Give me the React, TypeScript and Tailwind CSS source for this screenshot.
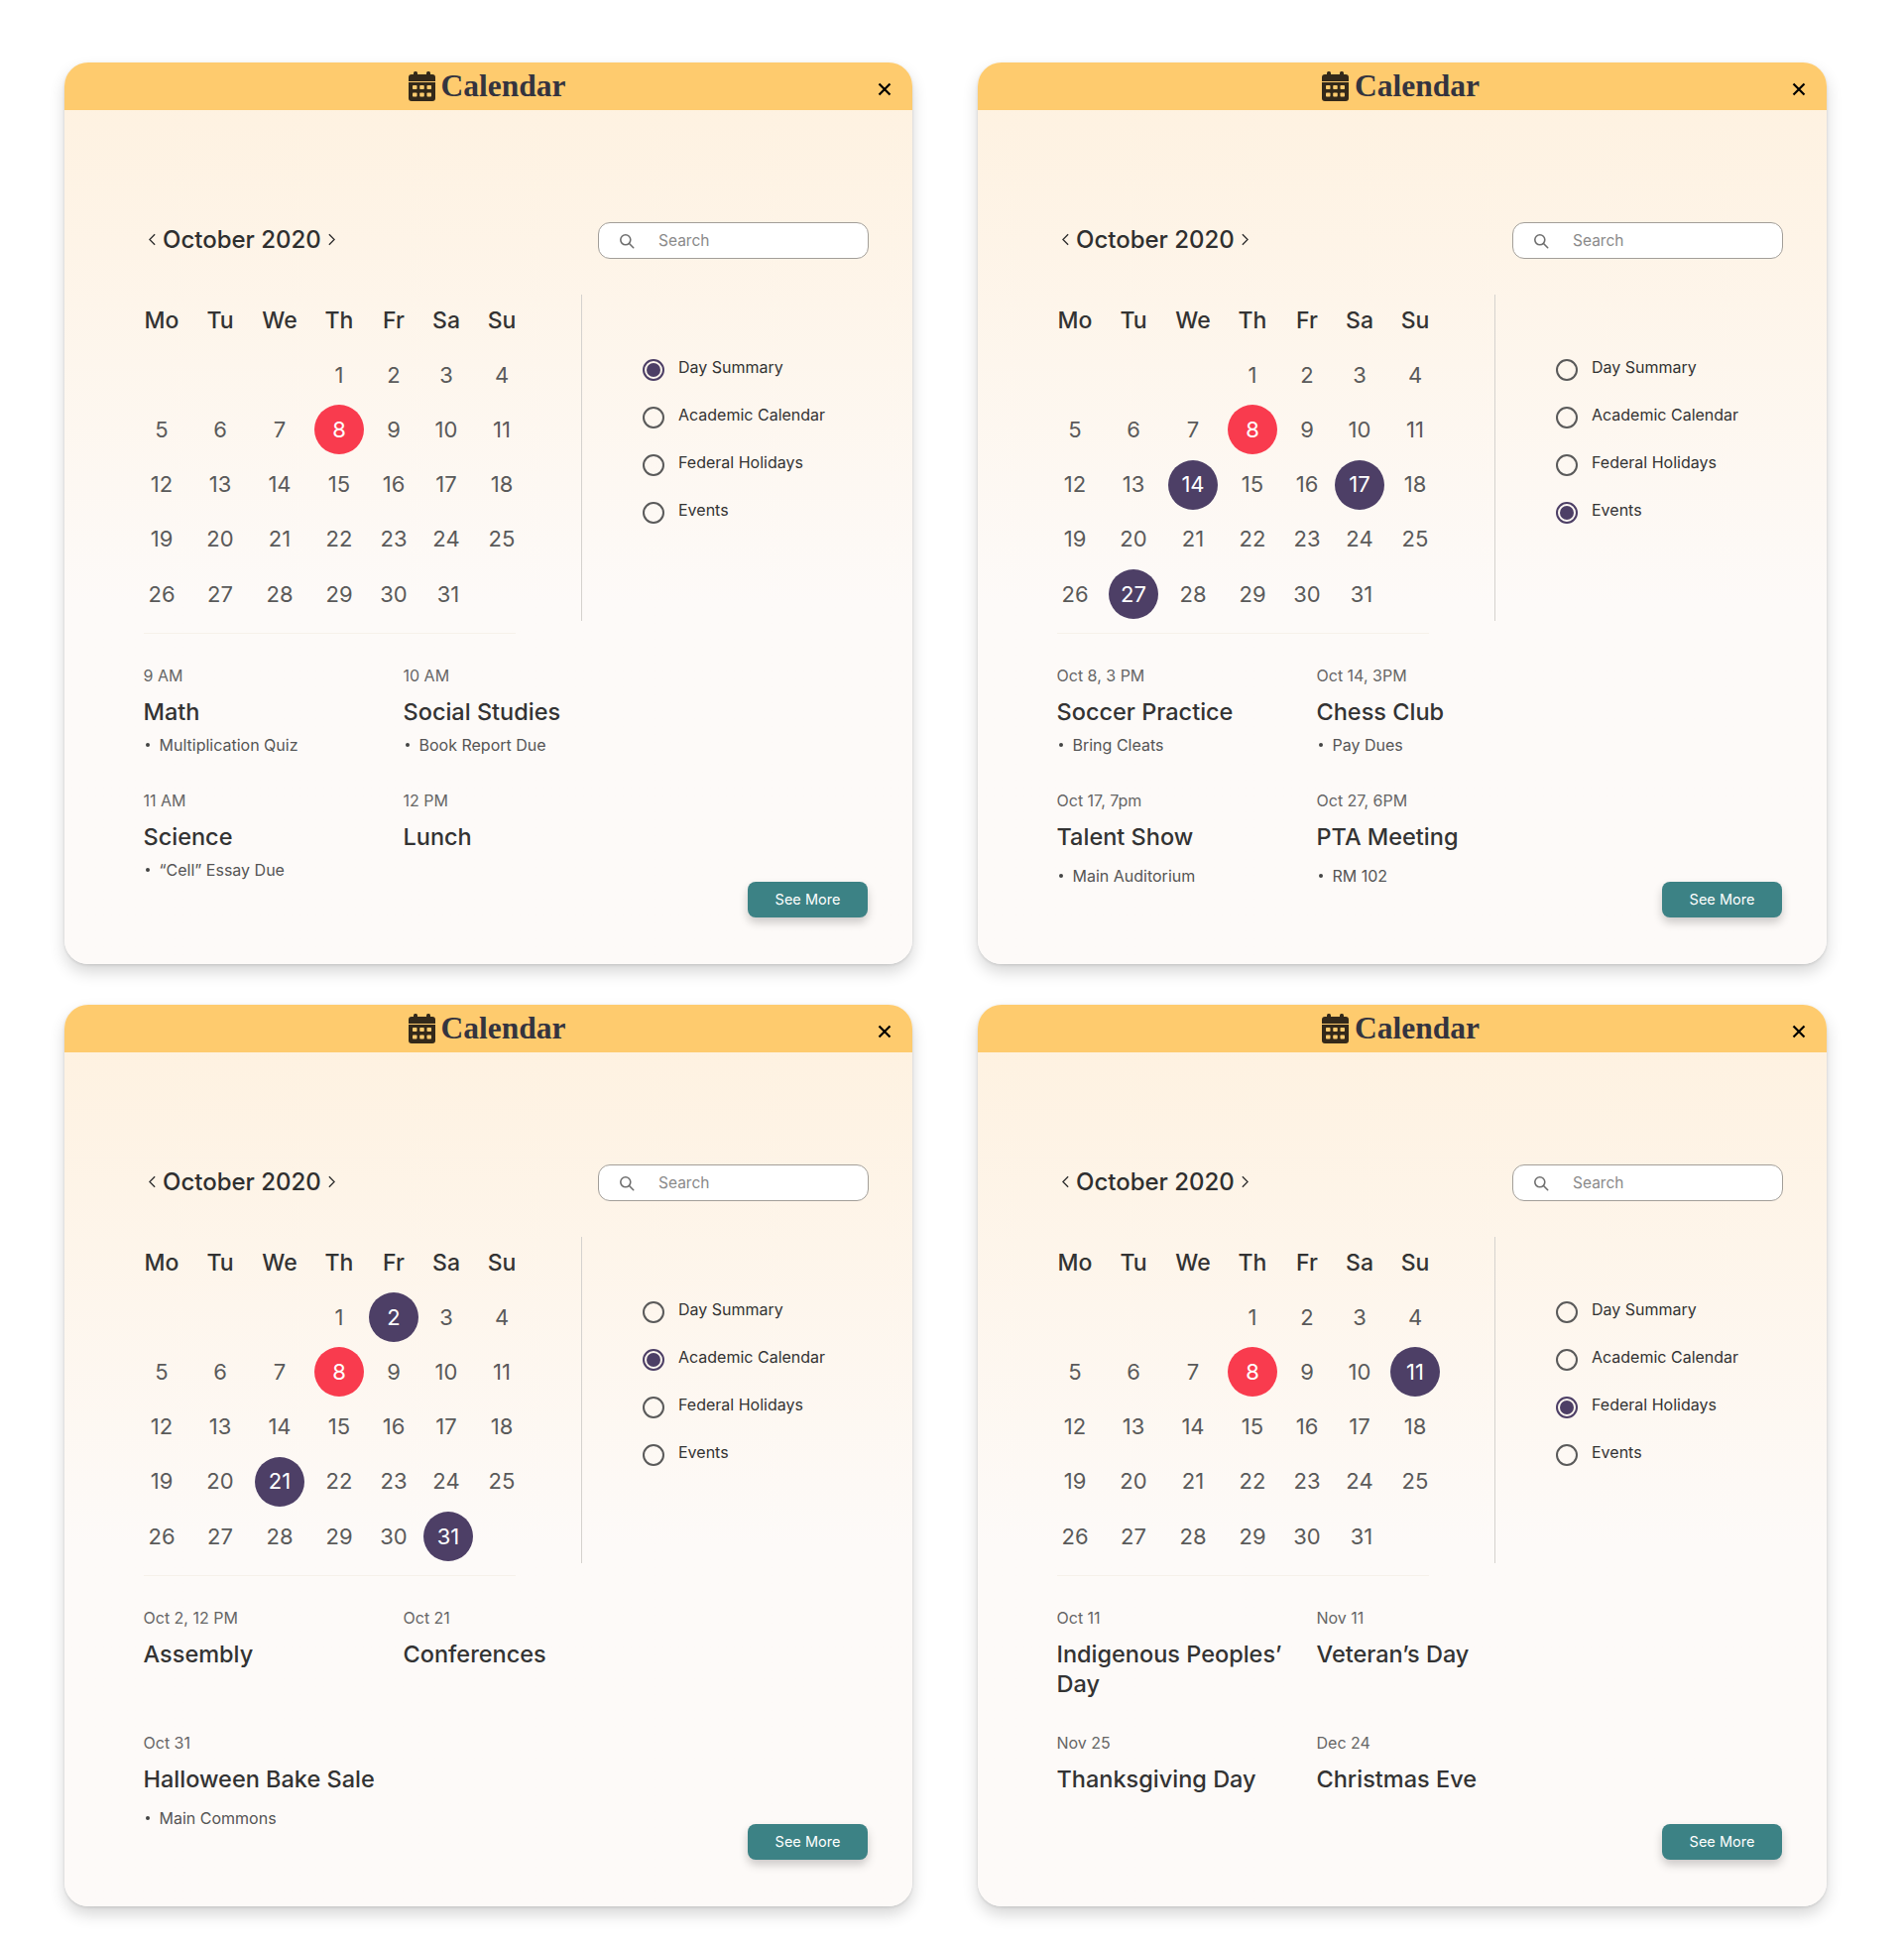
const weekdays = ['Mo', 'Tu', 'We', 'Th', 'Fr', 'Sa', 'Su'];
const options = ['Day Summary', 'Academic Calendar', 'Federal Holidays', 'Events'];

interface EventItem {
  time: string;
  title: string;
  detail?: string;
  loose?: boolean;
}

interface CalendarCardProps {
  option: number;
  picked: number[];
  events: EventItem[];
}

function CalendarIcon() {
  return (
    <svg viewBox="0 0 27 30" className="h-[30px] w-[27px]" fill="#33291a">
      <rect x="5" y="0" width="4" height="6" rx="1.5" />
      <rect x="18" y="0" width="4" height="6" rx="1.5" />
      <path d="M24 3a3 3 0 0 1 3 3v4H0V6a3 3 0 0 1 3-3z" />
      <path d="M0 11h27v16a3 3 0 0 1-3 3H3a3 3 0 0 1-3-3z" />
      <g fill="#fecb6e">
        <rect x="4" y="14" width="4.5" height="4" rx="0.8" />
        <rect x="11.25" y="14" width="4.5" height="4" rx="0.8" />
        <rect x="18.5" y="14" width="4.5" height="4" rx="0.8" />
        <rect x="4" y="21.5" width="4.5" height="4" rx="0.8" />
        <rect x="11.25" y="21.5" width="4.5" height="4" rx="0.8" />
        <rect x="18.5" y="21.5" width="4.5" height="4" rx="0.8" />
      </g>
    </svg>
  );
}

function SearchIcon() {
  return (
    <svg viewBox="0 0 16 16" className="h-[16px] w-[16px]" fill="none" stroke="#6f6f6f" strokeWidth="1.6">
      <circle cx="6.8" cy="6.8" r="5" />
      <path d="M10.5 10.5l4.2 4.2" strokeLinecap="round" />
    </svg>
  );
}

function Chevron({ right }: { right?: boolean }) {
  return (
    <svg viewBox="0 0 8 14" className="h-[13px] w-[7px]" fill="none" stroke="#2f2f2f" strokeWidth="1.6">
      <path d={right ? 'M1 1l6 6-6 6' : 'M7 1L1 7l6 6'} />
    </svg>
  );
}

function CalendarDay({ day, picked }: { day: number; picked: boolean }) {
  if (day === 8) {
    return (
      <div className="flex h-[50px] w-[50px] items-center justify-center rounded-full bg-[#f93b4e] text-white">
        {day}
      </div>
    );
  }
  if (picked) {
    return (
      <div
        className={
          day === 31
            ? 'ml-[4px] flex h-[50px] w-[50px] items-center justify-center rounded-full bg-[#4d3f66] text-white'
            : 'flex h-[50px] w-[50px] items-center justify-center rounded-full bg-[#4d3f66] text-white'
        }
      >
        {day}
      </div>
    );
  }
  return <div className={day === 31 ? 'ml-[4px]' : ''}>{day}</div>;
}

function CalendarGrid({ picked }: { picked: number[] }) {
  const days = Array.from({ length: 31 }, (_, i) => i + 1);
  return (
    <div className="-mt-[1.5px] grid w-[400px] grid-cols-[58px_60px_60px_60px_50px_56px_56px] auto-rows-[55.2px] items-center justify-items-center text-[22px] text-[#5a5a5a]">
      {weekdays.map((name) => (
        <div key={name} className="text-[23px] font-medium text-[#333333]">
          {name}
        </div>
      ))}
      <div className="col-span-3" />
      {days.map((day) => (
        <CalendarDay key={day} day={day} picked={picked.includes(day)} />
      ))}
    </div>
  );
}

function RadioRow({ label, checked }: { label: string; checked: boolean }) {
  return (
    <div className="flex h-[48px] items-center gap-[14px]">
      <div
        className={
          checked
            ? 'flex h-[22px] w-[22px] items-center justify-center rounded-full border-2 border-[#4d3f66]'
            : 'flex h-[22px] w-[22px] items-center justify-center rounded-full border-2 border-[#5a5a5a]'
        }
      >
        {checked && <div className="h-[14px] w-[14px] rounded-full bg-[#4d3f66]" />}
      </div>
      <div className="-mt-[6px] text-[16px] text-[#333333]">{label}</div>
    </div>
  );
}

function EventBlock({ time, title, detail, loose }: EventItem) {
  return (
    <div className="flex flex-col pr-[16px]">
      <div className="h-[20px] text-[16px] leading-[20px] text-[#666666]">{time}</div>
      <div className="mt-[12px] text-[23.5px] leading-[30px] font-medium text-[#333333]">{title}</div>
      {detail && (
        <div
          className={
            loose
              ? 'mt-[14px] flex items-center gap-[10px] pl-[2px] text-[16px] leading-[20px] text-[#555555]'
              : 'mt-[8px] flex items-center gap-[10px] pl-[2px] text-[16px] leading-[20px] text-[#555555]'
          }
        >
          <span className="h-[4px] w-[4px] rounded-full bg-[#444444]" />
          {detail}
        </div>
      )}
    </div>
  );
}

function CalendarCard({ option, picked, events }: CalendarCardProps) {
  return (
    <div className="flex h-[909px] flex-col rounded-[24px] bg-gradient-to-b from-[#fef1df] via-[#fdfaf8] via-60% to-[#fdfaf8] shadow-[0_8px_16px_rgba(0,0,0,0.16),0_1px_3px_rgba(0,0,0,0.12)]">
      <div className="grid h-[48px] grid-cols-[1fr_auto_1fr] items-center rounded-t-[24px] bg-[#fecb6e]">
        <div />
        <div className="mr-[3px] flex items-center gap-[6px]">
          <CalendarIcon />
          <div className="font-['Liberation_Serif',serif] text-[31.5px] font-bold text-[#34343f]">Calendar</div>
        </div>
        <div className="flex justify-end pt-[6px] pr-[21px]">
          <svg viewBox="0 0 14 14" className="h-[14px] w-[14px]" stroke="#000000" strokeWidth="2.2">
            <path d="M1.5 1.5l11 11M12.5 1.5l-11 11" />
          </svg>
        </div>
      </div>

      <div className="flex items-center justify-between pt-[113px] pr-[44px] pl-[85px]">
        <div className="-mt-[2px] flex items-center gap-[7px] text-[24px] font-medium text-[#2f2f2f]">
          <Chevron />
          October 2020
          <Chevron right />
        </div>
        <div className="flex h-[37px] w-[273px] items-center gap-[24px] rounded-[12px] border-[1.5px] border-[#a39f99] bg-white pl-[20px] text-[15.5px] text-[#8a8a8a]">
          <SearchIcon />
          Search
        </div>
      </div>

      <div className="mt-[36px] flex">
        <div className="w-[521px] pl-[69px]">
          <CalendarGrid picked={picked} />
        </div>
        <div className="h-[329px] border-l border-[#d5d2ce] pt-[52px] pl-[61px]">
          {options.map((label, i) => (
            <RadioRow key={label} label={label} checked={i === option} />
          ))}
        </div>
      </div>

      <div className="mt-[11.5px] ml-[80px] h-px w-[375px] bg-[#f6f1ea]" />

      <div className="mt-[32px] grid grid-cols-[262px_300px] auto-rows-[126px] pl-[79.5px]">
        {events.map((event) => (
          <EventBlock key={event.time} {...event} />
        ))}
      </div>

      <div className="mt-[-34.5px] flex justify-end pr-[45px]">
        <div className="flex h-[36px] w-[121px] items-center justify-center rounded-[8px] bg-[#3c8285] text-[14.5px] text-white shadow-[0_5px_10px_rgba(0,0,0,0.2)]">
          See More
        </div>
      </div>
    </div>
  );
}

export default function App() {
  return (
    <div className="min-h-[1967px] bg-white pt-[63px] pl-[65px] font-['Inter',sans-serif]">
      <div className="grid grid-cols-[855px_856px] gap-x-[66px] gap-y-[41px]">
        <CalendarCard
          option={0}
          picked={[]}
          events={[
            { time: '9 AM', title: 'Math', detail: 'Multiplication Quiz' },
            { time: '10 AM', title: 'Social Studies', detail: 'Book Report Due' },
            { time: '11 AM', title: 'Science', detail: '“Cell” Essay Due' },
            { time: '12 PM', title: 'Lunch' },
          ]}
        />
        <CalendarCard
          option={3}
          picked={[14, 17, 27]}
          events={[
            { time: 'Oct 8, 3 PM', title: 'Soccer Practice', detail: 'Bring Cleats' },
            { time: 'Oct 14, 3PM', title: 'Chess Club', detail: 'Pay Dues' },
            { time: 'Oct 17, 7pm', title: 'Talent Show', detail: 'Main Auditorium', loose: true },
            { time: 'Oct 27, 6PM', title: 'PTA Meeting', detail: 'RM 102', loose: true },
          ]}
        />
        <CalendarCard
          option={1}
          picked={[2, 21, 31]}
          events={[
            { time: 'Oct 2, 12 PM', title: 'Assembly' },
            { time: 'Oct 21', title: 'Conferences' },
            { time: 'Oct 31', title: 'Halloween Bake Sale', detail: 'Main Commons', loose: true },
          ]}
        />
        <CalendarCard
          option={2}
          picked={[11]}
          events={[
            { time: 'Oct 11', title: 'Indigenous Peoples’ Day' },
            { time: 'Nov 11', title: 'Veteran’s Day' },
            { time: 'Nov 25', title: 'Thanksgiving Day' },
            { time: 'Dec 24', title: 'Christmas Eve' },
          ]}
        />
      </div>
    </div>
  );
}
